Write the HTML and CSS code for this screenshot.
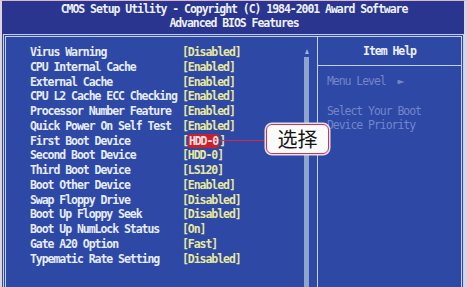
FILE: index.html
```html
<!DOCTYPE html>
<html>
<head>
<meta charset="utf-8">
<link rel="stylesheet" href="styles.css">
</head>
<body>
<div class="screen">
  <header class="title">
    <div>CMOS Setup Utility - Copyright (C) 1984-2001 Award Software</div>
    <div>Advanced BIOS Features</div>
  </header>
  <main class="box">
    <section class="left">
      <ul class="list">
        <li><span class="lab">Virus Warning</span><span class="val">[Disabled]</span></li>
        <li><span class="lab">CPU Internal Cache</span><span class="val">[Enabled]</span></li>
        <li><span class="lab">External Cache</span><span class="val">[Enabled]</span></li>
        <li><span class="lab">CPU L2 Cache ECC Checking</span><span class="val">[Enabled]</span></li>
        <li><span class="lab">Processor Number Feature</span><span class="val">[Enabled]</span></li>
        <li><span class="lab">Quick Power On Self Test</span><span class="val">[Enabled]</span></li>
        <li><span class="lab">First Boot Device</span><span class="val">[<span class="sel">HDD-0</span>]</span></li>
        <li><span class="lab">Second Boot Device</span><span class="val">[HDD-0]</span></li>
        <li><span class="lab">Third Boot Device</span><span class="val">[LS120]</span></li>
        <li><span class="lab">Boot Other Device</span><span class="val">[Enabled]</span></li>
        <li><span class="lab">Swap Floppy Drive</span><span class="val">[Disabled]</span></li>
        <li><span class="lab">Boot Up Floppy Seek</span><span class="val">[Disabled]</span></li>
        <li><span class="lab">Boot Up NumLock Status</span><span class="val">[On]</span></li>
        <li><span class="lab">Gate A20 Option</span><span class="val">[Fast]</span></li>
        <li><span class="lab">Typematic Rate Setting</span><span class="val">[Disabled]</span></li>
      </ul>
      <div class="scroll">
        <div class="arrow"></div>
        <div class="track"></div>
      </div>
    </section>
    <aside class="help">
      <div class="help-head">Item Help</div>
      <div class="help-body">
        <div>Menu Level &nbsp;&#9658;</div>
        <div>&nbsp;</div>
        <div>Select Your Boot</div>
        <div>Device Priority</div>
      </div>
    </aside>
  </main>
  <div class="pointer"></div>
  <div class="callout">选择</div>
</div>
</body>
</html>
```

FILE: styles.css
```css
* { box-sizing: border-box; margin: 0; padding: 0; }
html, body { width: 467px; height: 287px; overflow: hidden; }
body {
  background: #2e48a6;
  font-family: "DejaVu Sans Mono", "Liberation Mono", monospace;
  font-weight: bold;
  font-size: 11.5px;
  letter-spacing: -1.05px;
}
.screen {
  position: relative;
  width: 467px;
  height: 287px;
  display: flex;
  flex-direction: column;
  border-top: 1px solid #d9b8c8;
  border-left: 2px solid #e2d2dc;
  border-right: 3px solid #d8d4e4;
  background: #2e48a6;
}
.title {
  height: 33px;
  background: #29358f;
  color: #eef0f8;
  text-align: center;
  line-height: 14px;
  padding-top: 1px;
  padding-left: 2px;
}
.box {
  flex: 1;
  display: flex;
  margin-left: 1px;
  border: 3px double #c4d0f0;
  border-bottom: none;
}
.left {
  flex: 1;
  display: flex;
  padding-top: 8px;
}
.list {
  list-style: none;
  flex: 1;
  padding-left: 24px;
}
.list li {
  height: 14.75px;
  line-height: 14.75px;
  display: flex;
  white-space: nowrap;
}
.lab { width: 152px; color: #e6ecf6; }
.val { color: #e8e89c; }
.sel {
  background: #c8202c;
  color: #f4e0e0;
  padding: 0 1px;
  border-radius: 2px;
}
.scroll {
  width: 5px;
  margin-right: 8px;
  display: flex;
  flex-direction: column;
  align-items: center;
  padding-top: 4px;
}
.arrow {
  width: 0; height: 0;
  border-left: 2px solid transparent;
  border-right: 2px solid transparent;
  border-bottom: 5px solid #9fb2d8;
  margin-bottom: 3px;
}
.track {
  flex: 1;
  width: 5px;
  background: #8fa6cc;
}
.help {
  width: 144px;
  border-left: 1px solid #c4d0f0;
  display: flex;
  flex-direction: column;
}
.help-head {
  height: 29px;
  line-height: 28px;
  text-align: center;
  color: #eef0f8;
  border-bottom: 1px solid #c4d0f0;
}
.help-body {
  padding: 8px 0 0 9px;
  color: #7486c8;
  font-weight: normal;
}
.help-body div { height: 14.75px; line-height: 14.75px; white-space: nowrap; }
.pointer {
  position: absolute;
  left: 218px;
  top: 139px;
  width: 48px;
  height: 1px;
  background: #d42848;
}
.callout {
  position: absolute;
  left: 264px;
  top: 123px;
  width: 63px;
  height: 30px;
  background: #fbfbfb;
  border: 1.5px solid #cf3455;
  border-radius: 6px;
  box-shadow: 0 0 0 1.5px #e6e0e6;
  color: #151515;
  font-family: "Noto Sans CJK SC", "Noto Sans", sans-serif;
  font-weight: normal;
  font-size: 20px;
  letter-spacing: 0;
  line-height: 27px;
  text-align: center;
}
```
